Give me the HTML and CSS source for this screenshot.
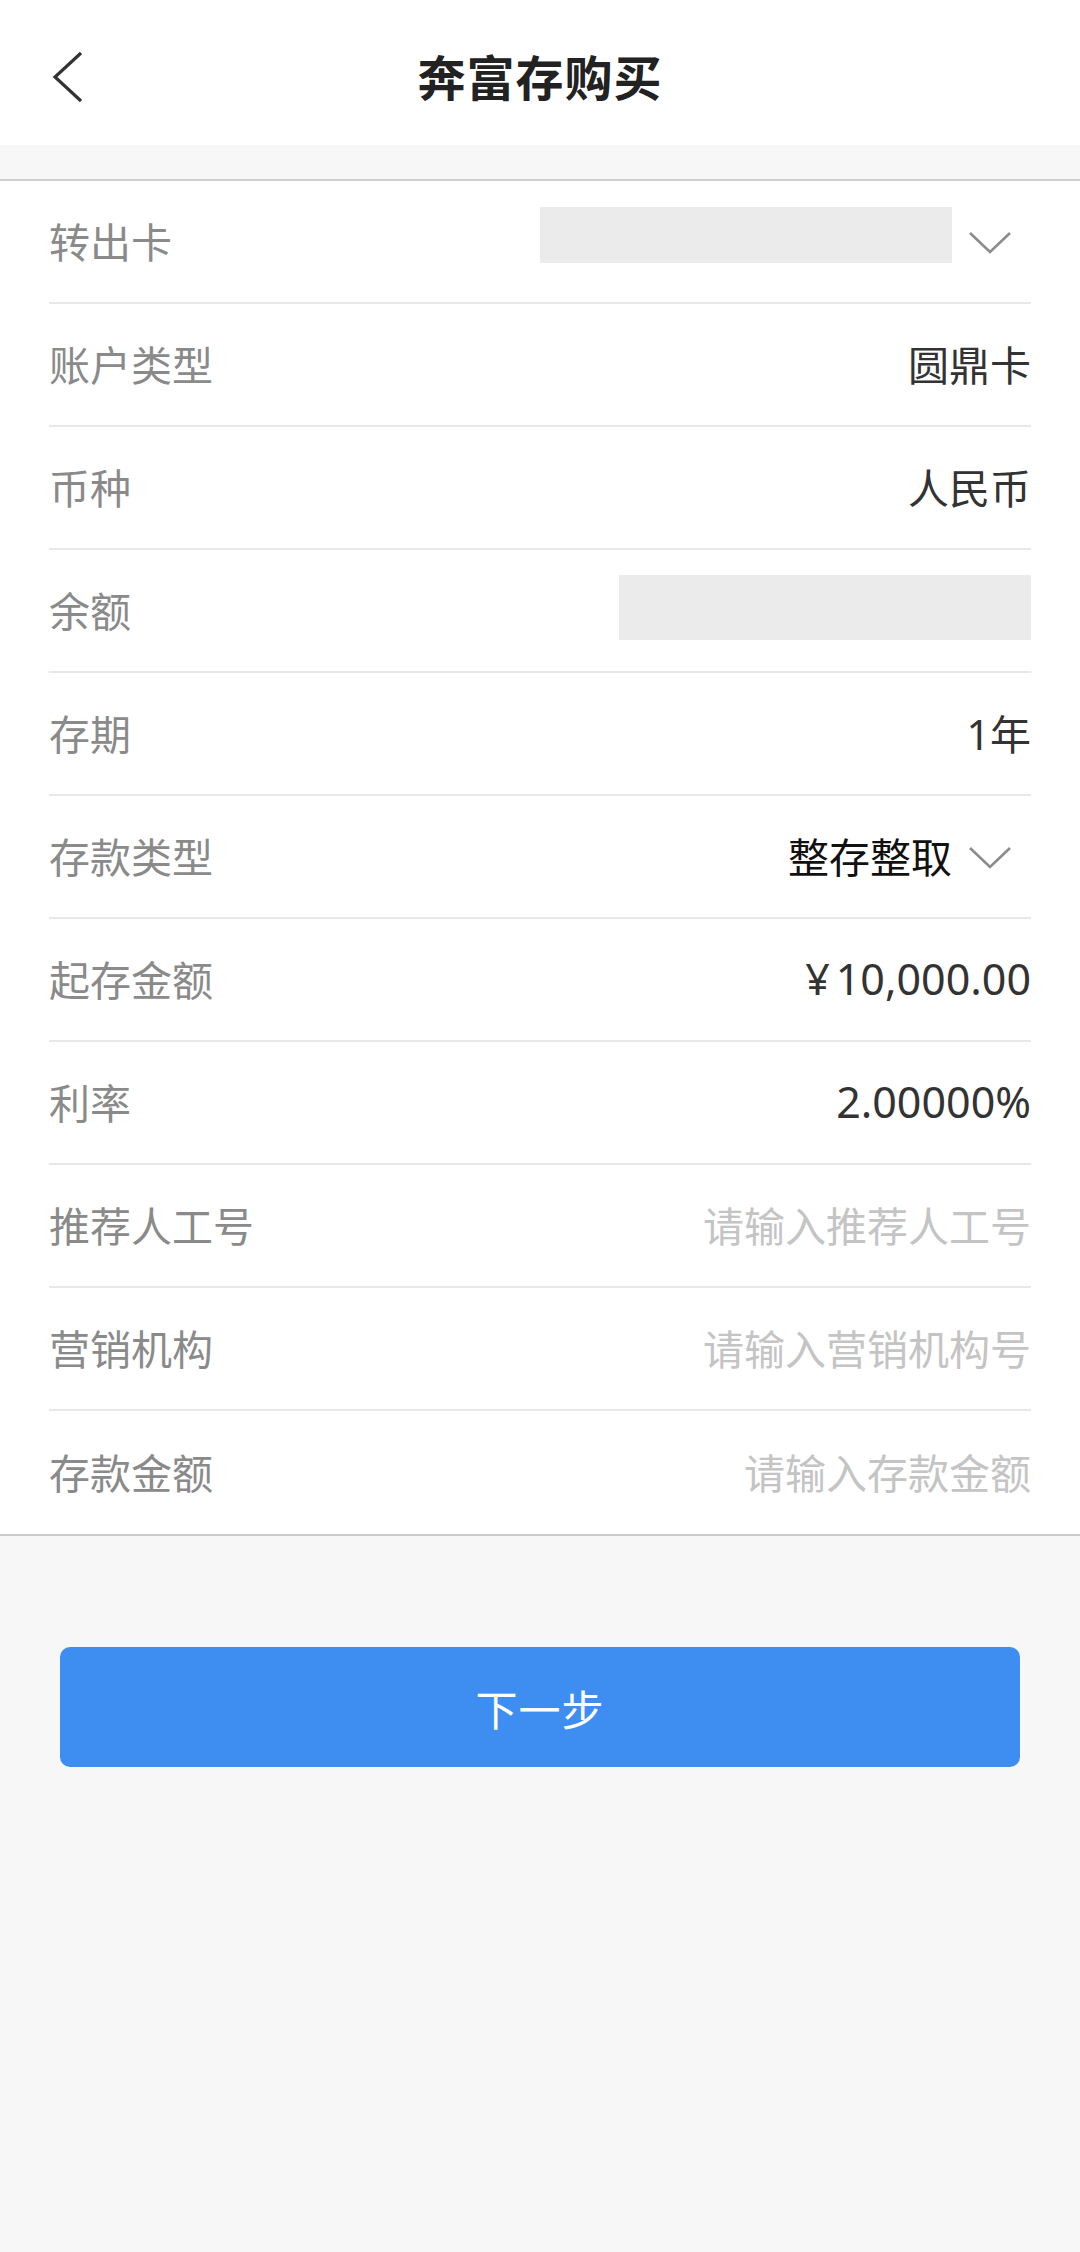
FILE: index.html
```html
<!DOCTYPE html>
<html lang="zh-CN">
<head>
<meta charset="utf-8">
<title>奔富存购买</title>
<link rel="stylesheet" href="styles.css">
</head>
<body>
<div class="page">
  <header class="topbar">
    <div class="back">
      <svg width="34" height="56" viewBox="0 0 34 56"><polyline points="30,3 4,27 30,51" fill="none" stroke="#333" stroke-width="3.2" stroke-linejoin="miter"/></svg>
    </div>
    <h1 class="title">奔富存购买</h1>
    <div class="spacer"></div>
  </header>
  <div class="band"></div>
  <section class="form">
    <div class="row">
      <span class="label">转出卡</span>
      <span class="right"><span class="mask mask-card"></span><span class="chev"><svg width="44" height="24" viewBox="0 0 44 24"><polyline points="2,2 22,21 42,2" fill="none" stroke="#8c8c8c" stroke-width="2.6"/></svg></span></span>
    </div>
    <div class="row"><span class="label">账户类型</span><span class="value">圆鼎卡</span></div>
    <div class="row"><span class="label">币种</span><span class="value">人民币</span></div>
    <div class="row"><span class="label">余额</span><span class="mask mask-bal"></span></div>
    <div class="row"><span class="label">存期</span><span class="value">1年</span></div>
    <div class="row">
      <span class="label">存款类型</span>
      <span class="right"><span class="value dark">整存整取</span><span class="chev"><svg width="44" height="24" viewBox="0 0 44 24"><polyline points="2,2 22,21 42,2" fill="none" stroke="#8c8c8c" stroke-width="2.6"/></svg></span></span>
    </div>
    <div class="row"><span class="label">起存金额</span><span class="value num"><span class="yen">¥</span>10,000.00</span></div>
    <div class="row"><span class="label">利率</span><span class="value num">2.00000%</span></div>
    <div class="row"><span class="label">推荐人工号</span><span class="placeholder">请输入推荐人工号</span></div>
    <div class="row"><span class="label">营销机构</span><span class="placeholder">请输入营销机构号</span></div>
    <div class="row"><span class="label">存款金额</span><span class="placeholder">请输入存款金额</span></div>
  </section>
  <div class="footer">
    <button class="next">下一步</button>
  </div>
</div>
</body>
</html>
```

FILE: styles.css
```css
* { box-sizing: border-box; }
html, body {
  margin: 0;
  padding: 0;
  background: #f7f7f7;
}
body {
  font-family: "Noto Sans", "Noto Sans CJK SC", sans-serif;
  width: 1080px;
  min-height: 2252px;
}
.page {
  min-height: 2252px;
  background: #f7f7f7;
}
.topbar {
  height: 145px;
  background: #fff;
  display: grid;
  grid-template-columns: 1fr auto 1fr;
  align-items: center;
}
.back {
  padding-left: 51px;
  padding-top: 10px;
  display: flex;
  align-items: center;
}
.title {
  margin: 0;
  font-family: "Noto Sans CJK SC", sans-serif;
  font-size: 48px;
  font-weight: 700;
  color: #222;
  letter-spacing: 1px;
  padding-top: 4px;
}
.band {
  height: 36px;
  background: #f7f7f7;
  border-bottom: 2px solid #cfcfcf;
}
.form {
  background: #fff;
  padding: 0 49px;
  border-bottom: 2px solid #cacaca;
}
.row {
  height: 123px;
  display: flex;
  align-items: center;
  justify-content: space-between;
  border-bottom: 2px solid #e8e8e8;
  font-family: "Noto Sans CJK SC", sans-serif;
  font-size: 41px;
}
.row:last-child { border-bottom: none; }
.label {
  color: #8a8a8a;
  padding-bottom: 3px;
}
.value {
  color: #333;
  font-family: "Noto Sans", "Noto Sans CJK SC", sans-serif;
  padding-bottom: 3px;
}
.value.num {
  font-size: 43px;
}
.yen {
  margin-right: 6px;
}
.value.dark { color: #111; }
.placeholder {
  color: #c4c4c4;
  padding-bottom: 3px;
}
.right {
  display: flex;
  align-items: center;
}
.chev {
  display: flex;
  margin-left: 16px;
  margin-right: 19px;
  padding-top: 2px;
}
.mask {
  display: block;
  background: #ebebeb;
}
.mask-card {
  width: 412px;
  height: 56px;
  margin-top: -14px;
}
.mask-bal {
  width: 412px;
  height: 65px;
  margin-top: -6px;
}
.footer {
  padding: 111px 60px 0;
}
.next {
  display: block;
  width: 100%;
  height: 120px;
  border: none;
  border-radius: 10px;
  background: #3d8ef0;
  color: #fff;
  font-family: "Noto Sans CJK SC", sans-serif;
  font-size: 42px;
  letter-spacing: 1px;
}
```
